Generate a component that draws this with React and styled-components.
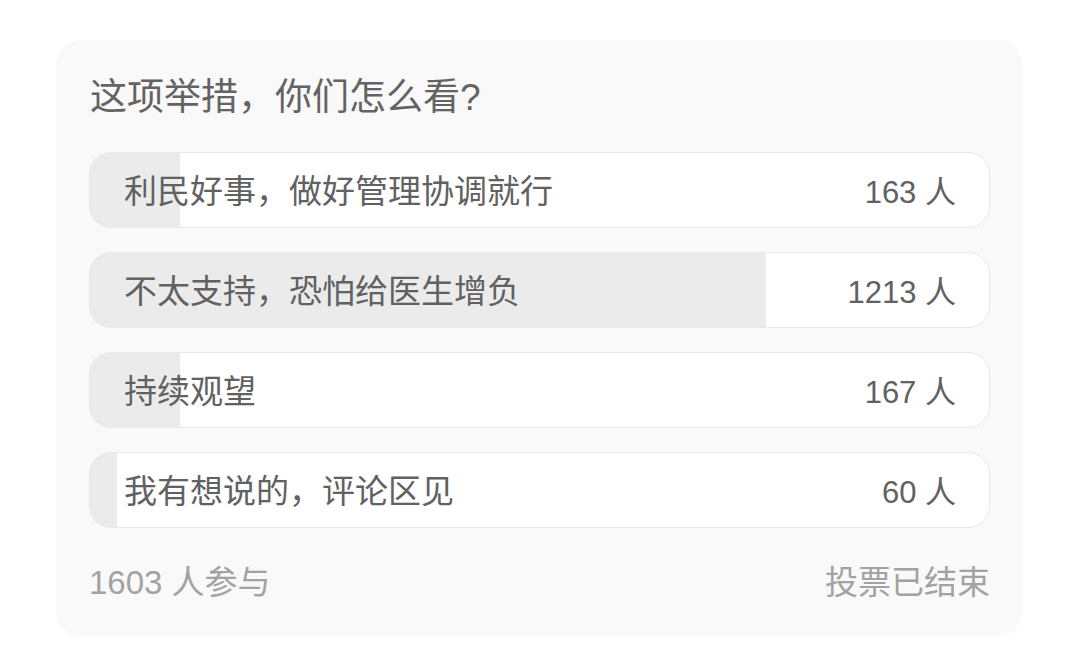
import React from 'react';
import styled, { createGlobalStyle } from 'styled-components';

const GlobalStyle = createGlobalStyle`
  html, body {
    margin: 0;
    padding: 0;
    background: #ffffff;
  }
  body {
    font-family: "Liberation Sans", "Noto Sans CJK SC", sans-serif;
    -webkit-font-smoothing: antialiased;
  }
`;

// Poll data: pct is the share of the bar that is filled
const options = [
  { id: 1, label: '利民好事，做好管理协调就行', count: 163, pct: 10 },
  { id: 2, label: '不太支持，恐怕给医生增负', count: 1213, pct: 75.2 },
  { id: 3, label: '持续观望', count: 167, pct: 10 },
  { id: 4, label: '我有想说的，评论区见', count: 60, pct: 3 },
];

export default function App() {
  return (
    <Page>
      <GlobalStyle />
      <Card>
        <Title>这项举措，你们怎么看?</Title>
        <OptionList>
          {options.map((item) => (
            <Option key={item.id} $pct={item.pct}>
              <Label>{item.label}</Label>
              <Count>{item.count} 人</Count>
            </Option>
          ))}
        </OptionList>
        <Footer>
          <span>1603 人参与</span>
          <span>投票已结束</span>
        </Footer>
      </Card>
    </Page>
  );
}

// Styling
const Page = styled.div`
  padding: 40px 58px 26px 56px;
`;

const Card = styled.section`
  background: #f9f9f9;
  border-radius: 24px;
  padding: 34px 32px 36px 33px;
`;

const Title = styled.h2`
  margin: 0 0 30px;
  font-size: 37px;
  line-height: 48px;
  font-weight: 400;
  color: #636363;
  padding-left: 1px;
`;

const OptionList = styled.div`
  display: flex;
  flex-direction: column;
  gap: 24px;
`;

const Option = styled.div`
  display: flex;
  align-items: center;
  justify-content: space-between;
  box-sizing: border-box;
  height: 76px;
  padding: 0 33px 2px 34px;
  border: 1px solid #e9e9e9;
  border-radius: 22px;
  background: linear-gradient(
    to right,
    #ebebeb 0,
    #ebebeb ${(p) => p.$pct}%,
    #ffffff ${(p) => p.$pct}%,
    #ffffff 100%
  );
`;

const Label = styled.span`
  font-size: 33px;
  color: #616161;
`;

const Count = styled.span`
  font-size: 31px;
  color: #616161;
`;

const Footer = styled.div`
  display: flex;
  justify-content: space-between;
  align-items: center;
  margin-top: 32px;
  height: 40px;
  font-size: 33px;
  color: #a2a2a2;
`;
